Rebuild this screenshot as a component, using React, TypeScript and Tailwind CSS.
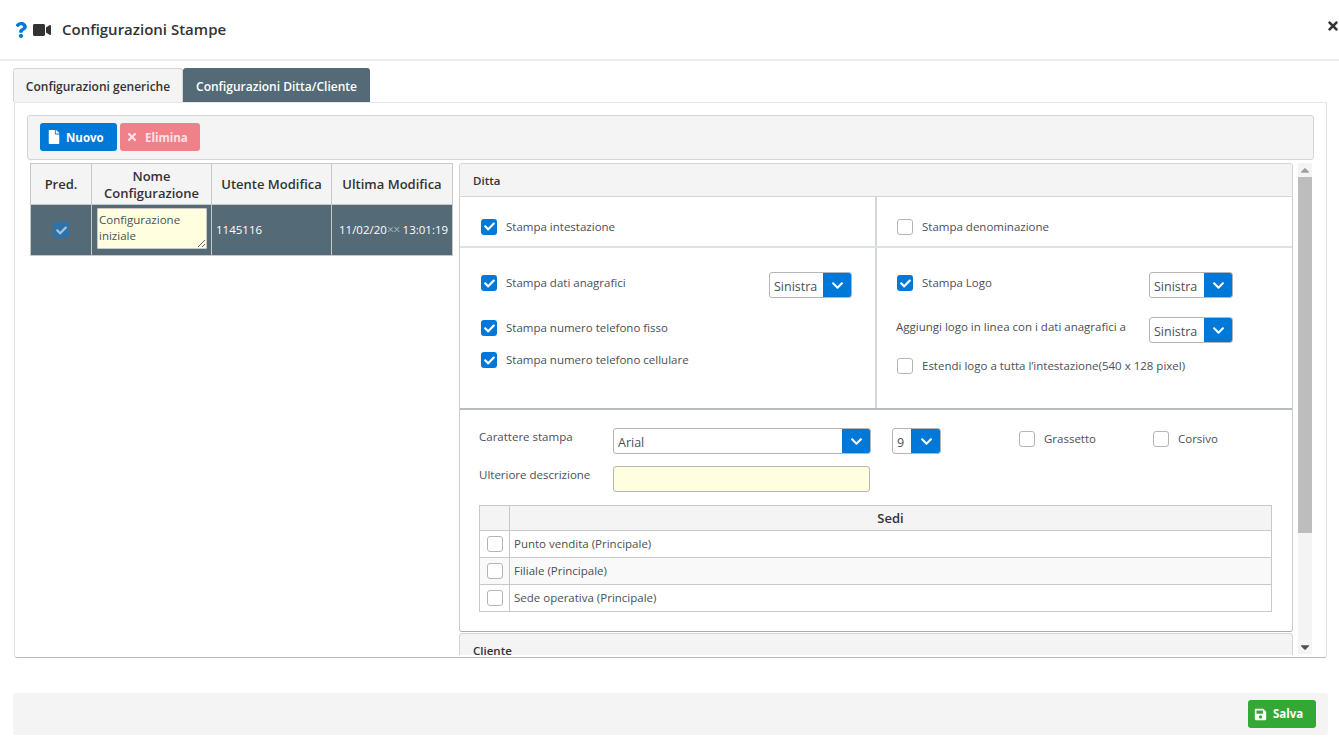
import React from "react";
import { FaQuestion, FaVideo, FaFile, FaTimes, FaSave, FaCheck, FaChevronDown, FaCaretUp, FaCaretDown } from "react-icons/fa";

function Check({ on = false, dim = false }: { on?: boolean; dim?: boolean }) {
  if (on)
    return (
      <span className={`flex h-[16px] w-[16px] shrink-0 items-center justify-center rounded-[3px] ${dim ? "bg-[#2f72a8]" : "bg-[#0078d7]"}`}>
        <FaCheck className={`text-[11px] ${dim ? "text-[#a9c4d8]" : "text-white"}`} />
      </span>
    );
  return <span className="block h-[16px] w-[16px] shrink-0 rounded-[3px] border border-[#b5b5b5] bg-white" />;
}

function CheckRow({ on, label, className = "" }: { on?: boolean; label: string; className?: string }) {
  return (
    <div className={`flex items-center ${className}`}>
      <Check on={on} />
      <span className="ml-[9px] text-[11.5px] leading-[16px] text-[#495057]">{label}</span>
    </div>
  );
}

function Select({ value, w, btn = "w-[29px]" }: { value: string; w: string; btn?: string }) {
  return (
    <div className={`flex h-[26px] shrink-0 overflow-hidden rounded-[3px] border border-[#b5b5b5] bg-white ${w}`}>
      <span className="flex-1 pl-[4px] text-[12.5px] leading-[27px] text-[#495057]">{value}</span>
      <span className={`-my-px -mr-px flex items-center justify-center bg-[#0078d7] ${btn}`}>
        <FaChevronDown className="text-[13px] text-white" />
      </span>
    </div>
  );
}

const th = "border border-[#c8c8c8] bg-[#f4f4f4] pt-[1px] text-center text-[13px] font-semibold leading-[17px] text-[#333]";

export default function App() {
  return (
    <div className="flex h-[743px] w-[1339px] flex-col overflow-hidden bg-white font-['Open_Sans',sans-serif] text-[#333]">
      <header className="flex h-[61px] shrink-0 items-center border-b-2 border-[#e9ebee] pl-[13px]">
        <FaQuestion className="text-[16px] text-[#0078d7]" />
        <FaVideo className="ml-[4px] text-[18px] text-[#333]" />
        <h1 className="ml-[11px] text-[15px] font-semibold text-[#333]">Configurazioni Stampe</h1>
        <FaTimes className="ml-auto translate-x-[1px] -translate-y-[4px] text-[14px] text-[#333]" />
      </header>

      <div className="ml-[13px] mt-[7px] flex h-[34px] shrink-0">
        <div className="flex w-[170px] items-center justify-center rounded-t-[3px] border border-b-0 border-[#d5d5d5] bg-[#f4f4f4] pt-[3px] text-[12px] font-semibold text-[#333]">
          Configurazioni generiche
        </div>
        <div className="flex w-[187px] items-center justify-center rounded-t-[3px] bg-[#546a76] pt-[3px] text-[12px] font-semibold text-white">
          Configurazioni Ditta/Cliente
        </div>
      </div>

      <main className="ml-[14px] flex h-[556px] w-[1313px] shrink-0 flex-col rounded-b-[3px] border border-t-[#e4e6e8] border-x-[#e0e2e5] border-b-[#b8bcbf] bg-white pb-[2px] pl-[12px] pr-[12px] pt-[12px]">
        <div className="flex h-[45px] shrink-0 items-center gap-[3px] rounded-[3px] border border-[#d5d5d5] bg-[#f4f4f4] pb-[2px] pl-[12px]">
          <button className="flex h-[28px] w-[77px] items-center rounded-[3px] bg-[#0078d7] pl-[7px] text-[11.5px] font-bold text-white">
            <FaFile className="text-[14px]" />
            <span className="ml-[5px] pt-[2px]">Nuovo</span>
          </button>
          <button className="flex h-[28px] w-[80px] items-center rounded-[3px] bg-[#f0808a] pl-[6px] text-[11.5px] font-bold text-[#fbe3e5]">
            <FaTimes className="text-[12px]" />
            <span className="ml-[7px] pt-[2px]">Elimina</span>
          </button>
        </div>

        <div className="mt-[3px] flex min-h-0 flex-1 pl-[3px]">
          <table className="h-[93px] w-[423px] shrink-0 table-fixed border-collapse self-start">
            <thead>
              <tr className="h-[41px]">
                <th className={`${th} w-[61px]`}>Pred.</th>
                <th className={`${th} w-[120px]`}>Nome Configurazione</th>
                <th className={`${th} w-[120px]`}>Utente Modifica</th>
                <th className={`${th} w-[121px]`}>Ultima Modifica</th>
              </tr>
            </thead>
            <tbody>
              <tr className="h-[51px] bg-[#546a76] text-[11.5px] text-white">
                <td className="border border-[#c8c8c8]">
                  <div className="flex justify-center"><Check on dim /></div>
                </td>
                <td className="border border-[#c8c8c8] px-[5px] pb-[4px] pt-0">
                  <textarea
                    readOnly
                    defaultValue={"Configurazione iniziale"}
                    className="block h-[41px] w-[110px] rounded-[1px] border border-[#c8c8c8] bg-[#ffffe0] px-[1px] pb-0 pt-[3px] text-[11.5px] leading-[16px] text-[#495057]"
                  />
                </td>
                <td className="border border-[#c8c8c8] pl-[4px]">1145116</td>
                <td className="whitespace-nowrap border border-[#c8c8c8] pl-[7px] text-[11.5px]">
                  11/02/20<span className="text-[12px] font-light leading-none tracking-[-0.5px] text-[#c5ced3]">××</span> 13:01:19
                </td>
              </tr>
            </tbody>
          </table>

          <div className="ml-[6px] flex min-w-0 flex-1 overflow-hidden">
            <div className="w-[834px] shrink-0">
              <div className="flex h-[34px] items-center rounded-t-[3px] border border-[#d5d5d5] bg-[#f4f4f4] pl-[13px] pt-[1px] text-[11.5px] font-semibold text-[#333]">
                Ditta
              </div>
              <div className="rounded-b-[3px] border border-t-0 border-x-[#c8ccd0] border-b-[#a8acb0] bg-white">
                <div className="grid h-[51px] grid-cols-[417px_1fr] border-b-2 border-[#dfe2e5]">
                  <div className="flex items-center border-r-2 border-[#d5d8db] pl-[21px] pt-[10px]">
                    <CheckRow on label="Stampa intestazione" />
                  </div>
                  <div className="flex items-center pl-[20px] pt-[10px]">
                    <CheckRow label="Stampa denominazione" />
                  </div>
                </div>
                <div className="grid h-[162px] grid-cols-[417px_1fr] border-b-2 border-[#b8bcc0]">
                  <div className="border-r-2 border-[#d5d8db] pl-[21px] pt-[27px]">
                    <div className="flex items-start">
                      <CheckRow on label="Stampa dati anagrafici" />
                      <div className="ml-auto mr-[23px] -mt-[3px]"><Select value="Sinistra" w="w-[83px]" /></div>
                    </div>
                    <CheckRow on label="Stampa numero telefono fisso" className="mt-[22px]" />
                    <CheckRow on label="Stampa numero telefono cellulare" className="mt-[16px]" />
                  </div>
                  <div className="pl-[20px] pt-[27px]">
                    <div className="flex items-start">
                      <CheckRow on label="Stampa Logo" />
                      <div className="ml-auto mr-[59px] -mt-[3px]"><Select value="Sinistra" w="w-[84px]" /></div>
                    </div>
                    <div className="-ml-[1px] mt-[19px] flex items-start">
                      <span className="mt-[2px] text-[11.5px] leading-[16px] text-[#495057]">Aggiungi logo in linea con i dati anagrafici a</span>
                      <div className="ml-auto mr-[59px]"><Select value="Sinistra" w="w-[84px]" /></div>
                    </div>
                    <CheckRow label="Estendi logo a tutta l’intestazione(540 x 128 pixel)" className="mt-[15px]" />
                  </div>
                </div>
                <div className="h-[221px] pl-[19px] pt-[18px]">
                  <div className="flex items-start">
                    <span className="mt-[1px] w-[134px] text-[11.5px] leading-[16px] text-[#495057]">Carattere stampa</span>
                    <Select value="Arial" w="w-[258px]" />
                    <div className="ml-[21px]"><Select value="9" w="w-[49px]" btn="w-[30px]" /></div>
                    <CheckRow label="Grassetto" className="ml-[78px] mt-[3px]" />
                    <CheckRow label="Corsivo" className="ml-[57px] mt-[3px]" />
                  </div>
                  <div className="mt-[12px] flex items-start">
                    <span className="mt-[1px] w-[134px] text-[11.5px] leading-[16px] text-[#495057]">Ulteriore descrizione</span>
                    <div className="h-[26px] w-[257px] rounded-[3px] border border-[#b5b5b5] bg-[#ffffe0]" />
                  </div>
                  <table className="mt-[13px] w-[793px] table-fixed border-collapse">
                    <thead>
                      <tr className="h-[25px]">
                        <th className="w-[30px] border border-[#c8c8c8] bg-[#f4f4f4]" />
                        <th className="border border-[#c8c8c8] bg-[#f4f4f4] pt-[1px] text-center text-[13px] font-semibold text-[#333]">Sedi</th>
                      </tr>
                    </thead>
                    <tbody>
                      {["Punto vendita (Principale)", "Filiale (Principale)", "Sede operativa (Principale)"].map((s, i) => (
                        <tr key={s} className={`h-[27px] ${i === 1 ? "bg-[#f9f9f9]" : "bg-white"}`}>
                          <td className="border border-[#c8c8c8]">
                            <div className="flex justify-center"><Check /></div>
                          </td>
                          <td className="border border-[#c8c8c8] pl-[4px] text-[11.5px] text-[#495057]">{s}</td>
                        </tr>
                      ))}
                    </tbody>
                  </table>
                </div>
              </div>
              <div className="mt-px flex h-[34px] items-center rounded-t-[3px] border border-[#d5d5d5] bg-[#f4f4f4] pl-[13px] pt-[2px] text-[11.5px] font-semibold text-[#333]">
                Cliente
              </div>
            </div>
            <div className="ml-[5px] flex h-[491px] w-[14px] shrink-0 flex-col items-center bg-[#f4f4f4]">
              <FaCaretUp className="h-[14px] shrink-0 text-[10px] text-[#a0a0a0]" />
              <div className="h-[356px] w-full bg-[#bdbdbd]" />
              <FaCaretDown className="mt-auto h-[14px] shrink-0 text-[10px] text-[#505050]" />
            </div>
          </div>
        </div>
      </main>

      <footer className="ml-[13px] mt-[35px] flex h-[42px] w-[1315px] shrink-0 items-center justify-end rounded-[3px] bg-[#f4f4f4] pr-[12px]">
        <button className="flex h-[28px] w-[68px] items-center rounded-[3px] bg-[#34a835] pl-[6px] text-[11.5px] font-bold text-white">
          <FaSave className="text-[13px]" />
          <span className="ml-[6px]">Salva</span>
        </button>
      </footer>
    </div>
  );
}
